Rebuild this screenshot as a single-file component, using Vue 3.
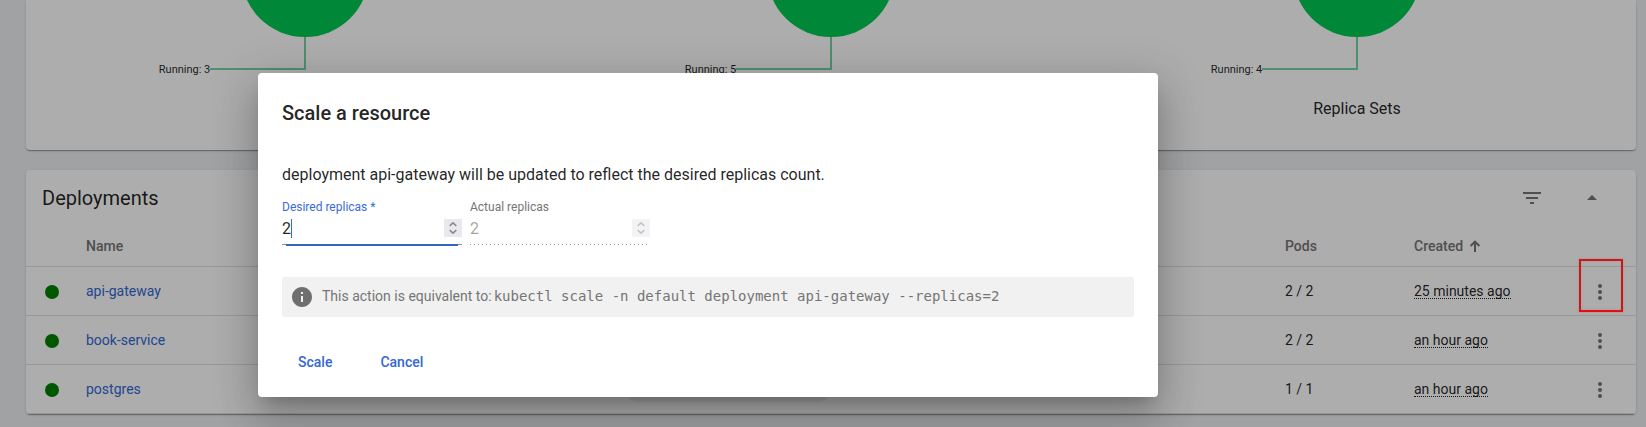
<script setup>
const charts = [
  { running: 3, title: '' },
  { running: 5, title: '' },
  { running: 4, title: 'Replica Sets' },
]
const rows = [
  { name: 'api-gateway', pods: '2 / 2', created: '25 minutes ago' },
  { name: 'book-service', pods: '2 / 2', created: 'an hour ago' },
  { name: 'postgres', pods: '1 / 1', created: 'an hour ago' },
]
const fields = [
  { label: 'Desired replicas *', value: '2', active: true },
  { label: 'Actual replicas', value: '2', active: false },
]
</script>

<template>
  <div class="page">
    <main class="content">
      <section class="card charts">
        <figure v-for="c in charts" :key="c.running" class="chart">
          <svg width="526" height="100" viewBox="0 0 526 100">
            <circle cx="263" cy="-27" r="64" fill="#00c752" />
            <path d="M263 37V69H168" fill="none" stroke="#00b050" stroke-opacity=".55" stroke-width="2" />
            <text x="168.3" y="73" text-anchor="end">Running: {{ c.running }}</text>
          </svg>
          <figcaption>{{ c.title }}</figcaption>
        </figure>
      </section>

      <section class="card table">
        <header class="card-head">
          <h2>Deployments</h2>
          <svg class="filter" width="24" height="24" viewBox="0 0 24 24"><path d="M10 18h4v-2h-4v2zM3 6v2h18V6H3zm3 7h12v-2H6v2z" /></svg>
          <svg class="collapse" width="24" height="24" viewBox="0 0 24 24"><path d="M7 14l5-5 5 5z" /></svg>
        </header>
        <div class="row head">
          <span></span>
          <span>Name</span>
          <span>Pods</span>
          <span class="sorted">Created
            <svg width="12" height="12" viewBox="0 0 12 12"><path d="M6 12V1.5M1.6 6L6 1.6 10.4 6" fill="none" stroke="#757575" stroke-width="2" /></svg>
          </span>
          <span></span>
        </div>
        <div v-for="r in rows" :key="r.name" class="row">
          <i class="status"></i>
          <a>{{ r.name }}</a>
          <span>{{ r.pods }}</span>
          <span><span class="time">{{ r.created }}</span></span>
          <span class="menu">
            <svg width="24" height="24" viewBox="0 0 24 24"><circle cx="12" cy="6" r="2" /><circle cx="12" cy="12" r="2" /><circle cx="12" cy="18" r="2" /></svg>
          </span>
        </div>
        <div class="pill"></div>
      </section>
    </main>

    <div class="overlay">
      <div class="dialog">
        <h1>Scale a resource</h1>
        <p class="message">deployment api-gateway will be updated to reflect the desired replicas count.</p>
        <div class="fields">
          <div v-for="f in fields" :key="f.label" class="field" :class="{ active: f.active }">
            <label>{{ f.label }}</label>
            <div class="input">
              <span class="value">{{ f.value }}</span>
              <span class="spinner">
                <svg width="18" height="18" viewBox="0 0 18 18"><path d="M5.7 6.8L9 3.9l3.3 2.9M5.7 11.2L9 14.1l3.3-2.9" fill="none" stroke="#8b8b92" stroke-width="1.6" /></svg>
              </span>
            </div>
            <div class="underline"></div>
          </div>
        </div>
        <div class="info">
          <svg width="24" height="24" viewBox="0 0 24 24"><path d="M12 2C6.48 2 2 6.48 2 12s4.48 10 10 10 10-4.48 10-10S17.52 2 12 2zm1 15h-2v-6h2v6zm0-8h-2V7h2v2z" fill="#6f6f6f" /></svg>
          <span>This action is equivalent to:</span>
          <code>kubectl scale -n default deployment api-gateway --replicas=2</code>
        </div>
        <div class="actions">
          <button>Scale</button>
          <button>Cancel</button>
        </div>
      </div>
      <div class="marker"></div>
    </div>
  </div>
</template>

<style>
body { margin: 0; overflow: hidden; }
</style>

<style scoped>
* { box-sizing: border-box; }
.page {
  position: relative;
  width: 1646px;
  height: 427px;
  overflow: hidden;
  background: #eceff1;
  color: rgba(0, 0, 0, 0.87);
  font: 14px/20px Roboto, sans-serif;
}
.content { display: flex; flex-direction: column; gap: 20px; padding: 0 10px 0 26px; }
.card {
  background: #fff;
  border-radius: 4px;
  box-shadow: 0 2px 1px -1px rgba(0, 0, 0, 0.2), 0 1px 1px rgba(0, 0, 0, 0.14), 0 1px 3px rgba(0, 0, 0, 0.12);
}
.charts { display: flex; height: 150px; padding: 0 16px; border-radius: 0 0 4px 4px; }
.chart { width: 526px; margin: 0; }
.chart svg { display: block; }
.chart text { font-size: 11px; fill: rgba(0, 0, 0, 0.87); }
figcaption { margin-top: -1px; font-size: 16px; text-align: center; }
.table { position: relative; height: 244px; }
.card-head { display: flex; align-items: center; height: 56px; padding: 0 32px 0 16px; }
.card-head svg { fill: #757575; }
.card-head h2 { flex: 1; margin: 0; font-size: 20px; font-weight: 400; }
.filter { margin-right: 36px; }
.row {
  display: grid;
  grid-template-columns: 60px 1199px 129px 160px 1fr;
  align-items: center;
  height: 49px;
  border-bottom: 1px solid #e0e0e0;
}
.row.head { height: 41px; color: #757575; font-weight: 500; }
.sorted { display: flex; align-items: center; gap: 6px; }
.status { width: 14px; height: 14px; margin: 1px 0 0 19px; border-radius: 50%; background: #008000; }
.row a { color: #3367d6; }
.time { display: inline-block; height: 17px; line-height: 18px; border-bottom: 1px dotted #222; }
.menu { display: flex; padding: 1px 0 0 14px; }
.menu svg { fill: #757575; }
.pill { position: absolute; left: 600px; bottom: 12px; width: 204px; height: 24px; border-radius: 12px; background: #eee; }
.overlay {
  position: absolute;
  inset: 0;
  display: flex;
  justify-content: center;
  padding: 73px 230px 0 0;
  background: rgba(0, 0, 0, 0.32);
}
.dialog {
  width: 900px;
  height: 324px;
  padding: 24px;
  border-radius: 4px;
  background: #fff;
  box-shadow: 0 11px 15px -7px rgba(0, 0, 0, 0.2), 0 24px 38px 3px rgba(0, 0, 0, 0.14), 0 9px 46px 8px rgba(0, 0, 0, 0.12);
}
h1 { margin: 0; font-size: 20px; line-height: 32px; font-weight: 500; }
.message { margin: 34px 0 0; font-size: 16px; line-height: 24px; }
.fields { display: flex; gap: 8px; margin-top: 11px; }
.field { width: 180px; height: 47px; color: #757575; }
.field label { display: block; font-size: 12px; line-height: 18px; }
.input { display: flex; align-items: center; justify-content: space-between; height: 18px; margin-top: 3px; font-size: 16px; color: rgba(0, 0, 0, 0.38); }
.value { height: 19px; line-height: 19px; }
.spinner { display: flex; background: #e9e9ed; opacity: 0.5; }
.underline {
  height: 1px;
  width: 178px;
  margin-top: 7px;
  background: repeating-linear-gradient(90deg, #949494 0 1px, transparent 1px 4px);
}
.active label { color: #3a6bdc; }
.active .input { color: rgba(0, 0, 0, 0.87); }
.active .value { border-right: 1px solid #326de6; }
.active .spinner { opacity: 1; }
.active .underline { width: 180px; padding: 0 4px; background: #949494; }
.active .underline::before { content: ''; display: block; height: 2px; background: #3367bd; }
.info {
  display: flex;
  align-items: center;
  height: 40px;
  margin-top: 32px;
  padding-left: 8px;
  border-radius: 2px;
  background: #f1f1f1;
  color: #757575;
}
.info span { margin: 0 2px 2px 8px; }
.info code { margin-bottom: 2px; font: 14px/20px "DejaVu Sans Mono", monospace; }
.actions { display: flex; gap: 16px; margin-top: 27px; }
button { padding: 0 16px; border: 0; background: none; color: #3367d6; font: 500 14px/36px Roboto, sans-serif; }
.marker {
  position: absolute;
  left: 1579px;
  top: 259px;
  width: 44px;
  height: 53px;
  border: 2px solid #b82020;
  border-bottom-color: #e01010;
  box-shadow: 0 0 2px rgba(255, 90, 90, 0.7), inset 0 0 2px rgba(255, 90, 90, 0.5);
}
</style>
